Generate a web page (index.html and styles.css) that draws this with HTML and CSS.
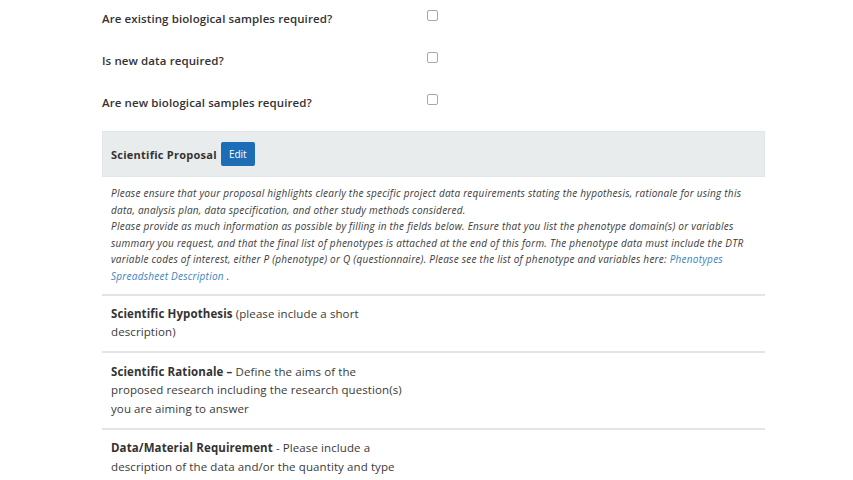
FILE: index.html
```
<!DOCTYPE html>
<html>
<head>
<meta charset="utf-8">
<link rel="stylesheet" href="styles.css">
</head>
<body>
<div class="page">
  <div class="questions">
    <div class="q-row"><span class="q-label">Are existing biological samples required?</span><span class="checkbox"></span></div>
    <div class="q-row"><span class="q-label">Is new data required?</span><span class="checkbox"></span></div>
    <div class="q-row"><span class="q-label">Are new biological samples required?</span><span class="checkbox"></span></div>
  </div>
  <div class="section-head">
    <span class="section-title">Scientific Proposal</span>
    <span class="btn-edit">Edit</span>
  </div>
  <div class="intro">
    Please ensure that your proposal highlights clearly the specific project data requirements stating the hypothesis, rationale for using this<br>
    data, analysis plan, data specification, and other study methods considered.<br>
    Please provide as much information as possible by filling in the fields below. Ensure that you list the phenotype domain(s) or variables<br>
    summary you request, and that the final list of phenotypes is attached at the end of this form. The phenotype data must include the DTR<br>
    variable codes of interest, either P (phenotype) or Q (questionnaire). Please see the list of phenotype and variables here: <a class="link">Phenotypes<br>
    Spreadsheet Description</a> .
  </div>
  <div class="field-row">
    <div class="field-label"><b>Scientific Hypothesis</b> (please include a short<br>description)</div>
    <div class="field-value"></div>
  </div>
  <div class="field-row">
    <div class="field-label"><b>Scientific Rationale –</b> Define the aims of the<br>proposed research including the research question(s)<br>you are aiming to answer</div>
    <div class="field-value"></div>
  </div>
  <div class="field-row">
    <div class="field-label"><b>Data/Material Requirement</b> - Please include a<br>description of the data and/or the quantity and type<br>of samples required</div>
    <div class="field-value"></div>
  </div>
</div>
</body>
</html>
```
FILE: styles.css
```
html, body {
  margin: 0;
  padding: 0;
  background: #ffffff;
}
body {
  font-family: "Open Sans", "Noto Sans", sans-serif;
  color: #333333;
  overflow: hidden;
  height: 480px;
}
.page {
  margin-left: 102px;
  width: 663px;
}
.questions {
  display: flex;
  flex-direction: column;
}
.q-row {
  display: flex;
  align-items: flex-start;
  height: 42px;
}
.q-label {
  width: 325px;
  padding-top: 11px;
  font-size: 11.5px;
  letter-spacing: 0.1px;
  line-height: 16px;
  font-weight: 600;
  color: #333;
}
.checkbox {
  margin-top: 10px;
  width: 9px;
  height: 9px;
  border: 1px solid #a8a8a8;
  border-radius: 2px;
  background: #fff;
}
.section-head {
  margin-top: 5px;
  height: 46px;
  background: #e9ecec;
  border: 1px solid #e2e6e6;
  box-sizing: border-box;
  display: flex;
  align-items: center;
  padding-left: 8px;
  gap: 4px;
}
.section-title {
  font-size: 11px;
  letter-spacing: 0.25px;
  font-weight: 700;
  color: #333;
}
.btn-edit {
  display: inline-flex;
  align-items: center;
  justify-content: center;
  width: 34px;
  height: 24px;
  background: #1d6db6;
  color: #ffffff;
  font-size: 10px;
  border-radius: 2px;
}
.intro {
  padding: 8px 0 9px 9px;
  font-size: 10px;
  letter-spacing: 0.25px;
  line-height: 16.6px;
  font-style: italic;
  color: #3a3a3a;
  white-space: nowrap;
  border-bottom: 2px solid #e4e4e4;
}
.link {
  color: #3a84c4;
}
.field-row {
  display: flex;
  border-bottom: 2px solid #e4e4e4;
  padding: 9.5px 0 9.5px 9px;
}
.field-label {
  width: 320px;
  font-size: 11.5px;
  letter-spacing: 0.1px;
  line-height: 18.4px;
  color: #3a3a3a;
  white-space: nowrap;
}
.field-label b {
  font-weight: 700;
  letter-spacing: 0.1px;
  color: #333;
}
.field-value {
  flex: 1;
}
```
